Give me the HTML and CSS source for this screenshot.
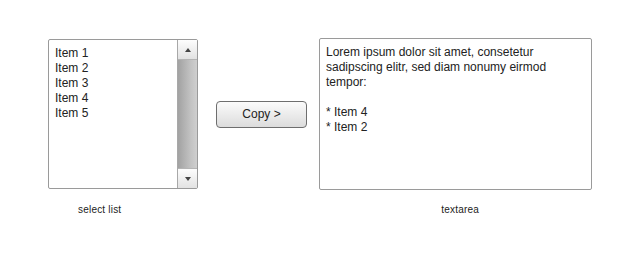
FILE: index.html
```html
<!DOCTYPE html>
<html>
<head>
<meta charset="utf-8">
<link rel="stylesheet" href="styles.css">
</head>
<body>
<div class="page">
  <div class="row">
    <div class="listbox">
      <div class="items">
        <div>Item 1</div>
        <div>Item 2</div>
        <div>Item 3</div>
        <div>Item 4</div>
        <div>Item 5</div>
      </div>
      <div class="scrollbar">
        <div class="sbtn"><span class="tri up"></span></div>
        <div class="thumb"></div>
        <div class="sbtn"><span class="tri down"></span></div>
      </div>
    </div>
    <div class="mid">
      <div class="button">Copy &gt;</div>
    </div>
    <div class="textbox">
      <div>Lorem ipsum dolor sit amet, consetetur sadipscing elitr, sed diam nonumy eirmod tempor:</div>
      <div>&nbsp;</div>
      <div>* Item 4</div>
      <div>* Item 2</div>
    </div>
  </div>
  <div class="labels">
    <div class="label l1">select list</div>
    <div class="label l2">textarea</div>
  </div>
</div>
</body>
</html>
```
FILE: styles.css
```css
html, body { margin: 0; padding: 0; background: #fff; }
body { font-family: "Liberation Sans", Arial, sans-serif; color: #222; }
.page { padding: 38px 0 0 48px; }
.row { display: flex; align-items: center; }
.listbox {
  width: 148px; height: 148px;
  border: 1px solid #9a9a9a;
  border-radius: 2px;
  display: flex;
  font-size: 12px; line-height: 15px;
}
.items { flex: 1; padding: 6px 0 0 6px; }
.scrollbar {
  width: 19px;
  border-left: 1px solid #a8a8a8;
  display: flex; flex-direction: column;
}
.sbtn {
  height: 19px;
  background: linear-gradient(#fdfdfd, #e2e2e2);
  display: flex; align-items: center; justify-content: center;
}
.sbtn:first-child { border-bottom: 1px solid #b4b4b4; }
.sbtn:last-child { border-top: 1px solid #b4b4b4; }
.thumb { flex: 1; background: linear-gradient(90deg, #a2a2a2, #c4c4c4 70%, #cfcfcf); }
.tri { width: 0; height: 0; border-left: 3px solid transparent; border-right: 3px solid transparent; }
.tri.up { border-bottom: 4px solid #444; }
.tri.down { border-top: 4px solid #444; }
.mid { width: 121px; display: flex; justify-content: flex-start; padding-left: 18px; box-sizing: border-box; }
.button {
  width: 89px; height: 25px;
  border: 1px solid #6e6e6e;
  border-radius: 4px;
  background: linear-gradient(#fbfbfb, #dcdcdc);
  font-size: 12px; line-height: 25px;
  text-align: center;
  color: #222;
}
.textbox {
  width: 245px; height: 144px;
  border: 1px solid #9a9a9a;
  border-radius: 2px;
  padding: 6px 20px 0 6px;
  font-size: 12px; line-height: 15px;
}
.labels { display: flex; padding-top: 14px; font-size: 10px; line-height: 12px; letter-spacing: 0.2px; color: #222; }
.l1 { margin-left: 30px; }
.l2 { margin-left: 320px; }
```
